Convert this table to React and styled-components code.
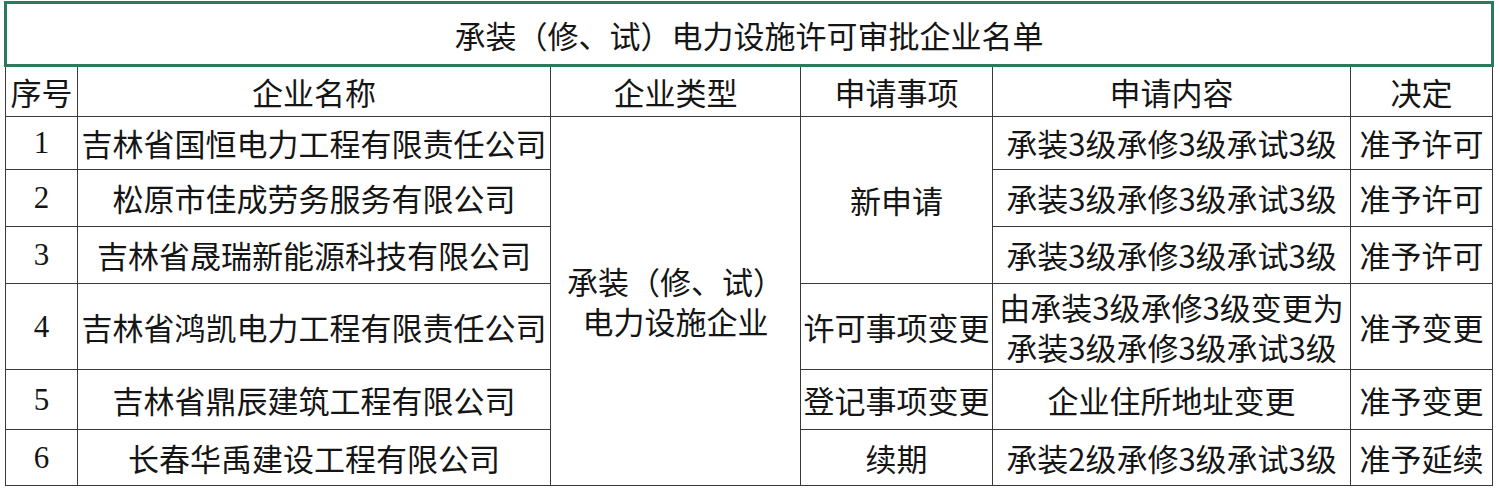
import React from "react";
import styled, { createGlobalStyle } from "styled-components";

const GlobalStyle = createGlobalStyle`
  html, body {
    margin: 0;
    padding: 0;
    background: #ffffff;
  }
`;

const Page = styled.div`
  padding: 1px 0 0 4px;
  width: 1500px;
  height: 495px;
  box-sizing: border-box;
  background: #fff;
`;

const Table = styled.table`
  width: 1487px;
  border-collapse: collapse;
  table-layout: fixed;
  font-family: "Noto Sans CJK SC", "Liberation Sans", sans-serif;
  font-size: 31px;
  color: #151515;
`;

const TitleCell = styled.th`
  height: 60px;
  border: 3px solid #2b7a5c;
  font-weight: 400;
  text-align: center;
  vertical-align: middle;
  padding: 0;
`;

const Row = styled.tr`
  height: ${(p) => p.$h}px;
`;

const Cell = styled.td`
  border: 1.5px solid #3a3a3a;
  text-align: center;
  vertical-align: middle;
  padding: 0;
  white-space: nowrap;
  line-height: 38px;
  font-weight: 400;
`;

const HeadCell = styled(Cell).attrs({ as: "th" })`
  font-weight: 400;
`;

const NumCell = styled(Cell)`
  font-family: "Liberation Serif", "Noto Sans CJK SC", serif;
`;

const Line = styled.span`
  display: block;
  line-height: 40px;
`;

const rows = [
  { n: 1, name: "吉林省国恒电力工程有限责任公司", content: ["承装3级承修3级承试3级"], decision: "准予许可", h: 53 },
  { n: 2, name: "松原市佳成劳务服务有限公司", content: ["承装3级承修3级承试3级"], decision: "准予许可", h: 57 },
  { n: 3, name: "吉林省晟瑞新能源科技有限公司", content: ["承装3级承修3级承试3级"], decision: "准予许可", h: 57 },
  { n: 4, name: "吉林省鸿凯电力工程有限责任公司", content: ["由承装3级承修3级变更为", "承装3级承修3级承试3级"], decision: "准予变更", h: 86, item: "许可事项变更" },
  { n: 5, name: "吉林省鼎辰建筑工程有限公司", content: ["企业住所地址变更"], decision: "准予变更", h: 60, item: "登记事项变更" },
  { n: 6, name: "长春华禹建设工程有限公司", content: ["承装2级承修3级承试3级"], decision: "准予延续", h: 56, item: "续期" },
];

export default function App() {
  return (
    <>
      <GlobalStyle />
      <Page>
        <Table>
          <colgroup>
            <col style={{ width: 72 }} />
            <col style={{ width: 473 }} />
            <col style={{ width: 250 }} />
            <col style={{ width: 192 }} />
            <col style={{ width: 358 }} />
            <col style={{ width: 142 }} />
          </colgroup>
          <thead>
            <tr>
              <TitleCell colSpan={6}>承装（修、试）电力设施许可审批企业名单</TitleCell>
            </tr>
            <Row $h={51}>
              <HeadCell>序号</HeadCell>
              <HeadCell>企业名称</HeadCell>
              <HeadCell>企业类型</HeadCell>
              <HeadCell>申请事项</HeadCell>
              <HeadCell>申请内容</HeadCell>
              <HeadCell>决定</HeadCell>
            </Row>
          </thead>
          <tbody>
            {rows.map((r) => (
              <Row key={r.n} $h={r.h}>
                <NumCell>{r.n}</NumCell>
                <Cell>{r.name}</Cell>
                {r.n === 1 && (
                  <Cell rowSpan={6}>
                    <Line>承装（修、试）</Line>
                    <Line>电力设施企业</Line>
                  </Cell>
                )}
                {r.n === 1 && <Cell rowSpan={3}>新申请</Cell>}
                {r.item && <Cell>{r.item}</Cell>}
                <Cell>
                  {r.content.map((c) => (
                    <Line key={c}>{c}</Line>
                  ))}
                </Cell>
                <Cell>{r.decision}</Cell>
              </Row>
            ))}
          </tbody>
        </Table>
      </Page>
    </>
  );
}
